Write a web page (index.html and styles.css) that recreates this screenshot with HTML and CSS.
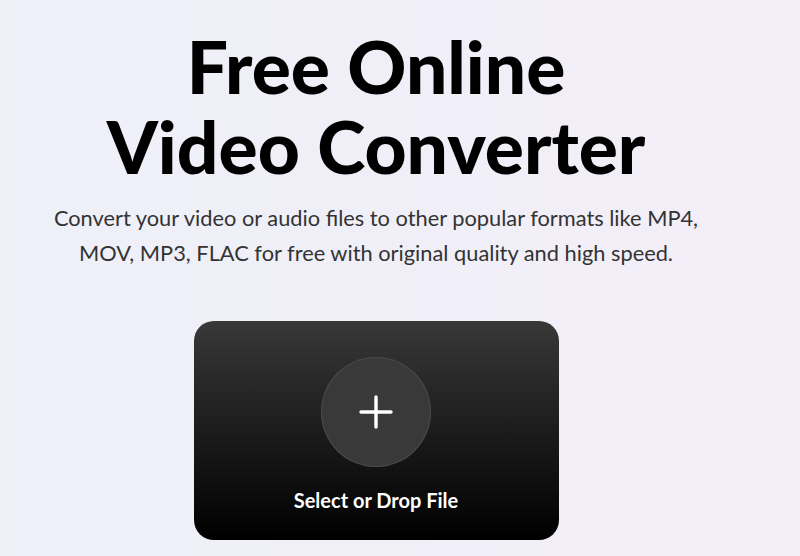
FILE: index.html
```html
<!DOCTYPE html>
<html lang="en">
<head>
<meta charset="utf-8">
<title>Free Online Video Converter</title>
<link rel="stylesheet" href="styles.css">
</head>
<body>
<main class="hero">
  <h1 class="title">Free Online<br>Video Converter</h1>
  <p class="subtitle">Convert your video or audio files to other popular formats like MP4,<br>MOV, MP3, FLAC for free with original quality and high speed.</p>
  <div class="dropzone">
    <div class="add-btn">
      <svg class="plus" width="34" height="34" viewBox="0 0 34 34" aria-hidden="true">
        <path d="M17 2V32M2 17H32" stroke="#fff" stroke-width="3.4" stroke-linecap="round" fill="none"/>
      </svg>
    </div>
    <div class="drop-label">Select or Drop File</div>
  </div>
</main>
</body>
</html>
```

FILE: styles.css
```css
html, body {
  margin: 0;
  padding: 0;
}
body {
  width: 800px;
  height: 556px;
  overflow: hidden;
  background: linear-gradient(90deg, #eef0f8 0%, #f0eff8 50%, #f4eef8 100%);
  font-family: "Lato", "Open Sans", sans-serif;
}
.hero {
  display: flex;
  flex-direction: column;
  align-items: center;
  padding-top: 26px;
  width: 752px;
}
.title {
  margin: 0;
  font-size: 73px;
  line-height: 80px;
  font-weight: 900;
  color: #000;
  text-align: center;
}
.subtitle {
  margin: 14px 0 0;
  font-size: 21.8px;
  line-height: 35px;
  color: #333;
  text-align: center;
  font-weight: 400;
}
.dropzone {
  margin-top: 51px;
  width: 365px;
  height: 219px;
  box-sizing: border-box;
  border-radius: 20px;
  background: linear-gradient(180deg, #383838 0%, #1c1c1c 50%, #000 100%);
  display: flex;
  flex-direction: column;
  align-items: center;
  padding-top: 36px;
}
.add-btn {
  width: 110px;
  height: 110px;
  border-radius: 50%;
  background: #393939;
  box-shadow: inset 0 0 0 1px #4a4a4a;
  display: flex;
  align-items: center;
  justify-content: center;
}
.drop-label {
  margin-top: 21px;
  color: #fff;
  font-size: 20px;
  font-weight: 700;
  line-height: 24px;
}
```
